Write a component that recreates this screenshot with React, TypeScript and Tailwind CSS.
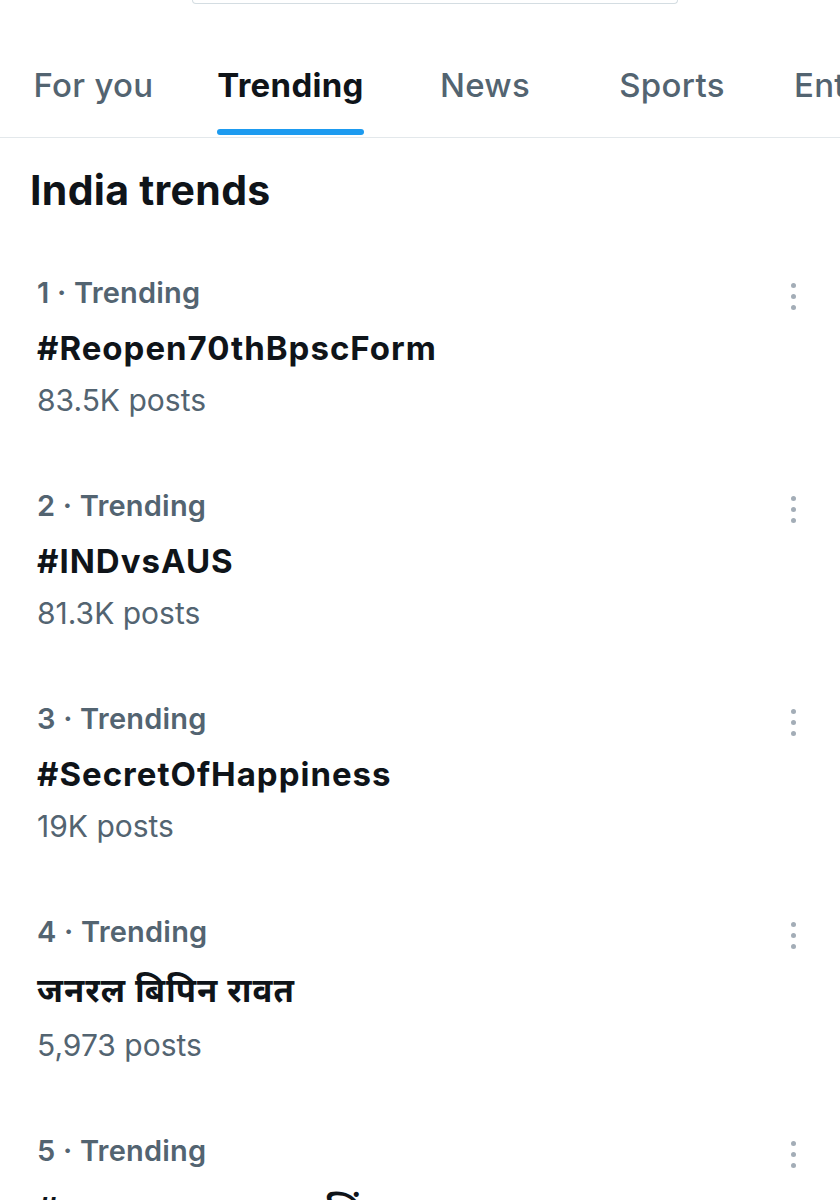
import React from 'react';

interface Trend {
  rank: number;
  title: string;
  posts: string;
  hindi?: boolean;
}

const trends: Trend[] = [
  { rank: 1, title: '#Reopen70thBpscForm', posts: '83.5K posts' },
  { rank: 2, title: '#INDvsAUS', posts: '81.3K posts' },
  { rank: 3, title: '#SecretOfHappiness', posts: '19K posts' },
  { rank: 4, title: 'जनरल बिपिन रावत', posts: '5,973 posts', hindi: true },
  { rank: 5, title: '#जनरलसाहब_अमर_सिंह', posts: '4,210 posts', hindi: true },
];

const tabs = [
  { label: 'For you', width: 'w-[187px] justify-center' },
  { label: 'Trending', width: 'w-[207px] justify-center', active: true },
  { label: 'News', width: 'w-[182px] justify-center' },
  { label: 'Sports', width: 'w-[192px] justify-center' },
  { label: 'Entertainment', width: 'w-[260px] justify-start pl-[26px]' },
];

const MoreDots: React.FC = () => (
  <div className="flex flex-col items-center gap-[6px] pt-[10px] w-[20px]">
    <span className="block w-[5px] h-[5px] rounded-full bg-[#a3adb7]" />
    <span className="block w-[5px] h-[5px] rounded-full bg-[#a3adb7]" />
    <span className="block w-[5px] h-[5px] rounded-full bg-[#a3adb7]" />
  </div>
);

const TrendRow: React.FC<{ trend: Trend }> = ({ trend }) => (
  <div className="flex pl-[37px] pr-[37px] pt-[32px] pb-[34px]">
    <div className="flex-1 min-w-0">
      <div className="text-[29px] leading-[40px] font-semibold tracking-[0.2px] text-[#536471]">
        {trend.rank} · Trending
      </div>
      <div
        className={`mt-[15px] text-[33px] font-bold tracking-[1px] text-[#0f1419] whitespace-nowrap ${
          trend.hindi ? 'leading-[46px]' : 'leading-[40px]'
        }`}
      >
        {trend.title}
      </div>
      <div className="mt-3 text-[30px] leading-[40px] text-[#536471]">{trend.posts}</div>
    </div>
    <MoreDots />
  </div>
);

const App: React.FC = () => {
  return (
    <div
      className="w-[840px] h-[1200px] overflow-hidden bg-white"
      style={{ fontFamily: "Inter, 'Noto Sans Devanagari', 'Noto Sans', sans-serif" }}
    >
      {/* search box edge */}
      <div className="h-[42px] flex justify-center pl-[30px]">
        <div className="w-[486px] h-[4px] border-x border-b border-[#d4dde2] rounded-b-[6px]" />
      </div>

      {/* tabs */}
      <div className="flex border-b border-[#e3e8eb] overflow-hidden h-[96px]">
        {tabs.map((tab) => (
          <div key={tab.label} className={`${tab.width} shrink-0 flex`}>
            <div className="flex flex-col items-center">
              <div
                className={`text-[33px] leading-[86px] whitespace-nowrap tracking-[0.3px] ${
                  tab.active ? 'font-bold text-[#0f1419]' : 'font-medium text-[#536471]'
                }`}
              >
                {tab.label}
              </div>
              {tab.active && <div className="w-full h-[6px] mt-[1px] rounded-full bg-[#1d9bf0]" />}
            </div>
          </div>
        ))}
      </div>

      {/* heading */}
      <div className="px-[30px] pt-[28px]">
        <h2 className="text-[41px] leading-[48px] font-bold tracking-[0.3px] text-[#0f1419]">India trends</h2>
      </div>

      <div className="mt-[27px]">
        {trends.map((t) => (
          <TrendRow key={t.rank} trend={t} />
        ))}
      </div>
    </div>
  );
};

export default App;
